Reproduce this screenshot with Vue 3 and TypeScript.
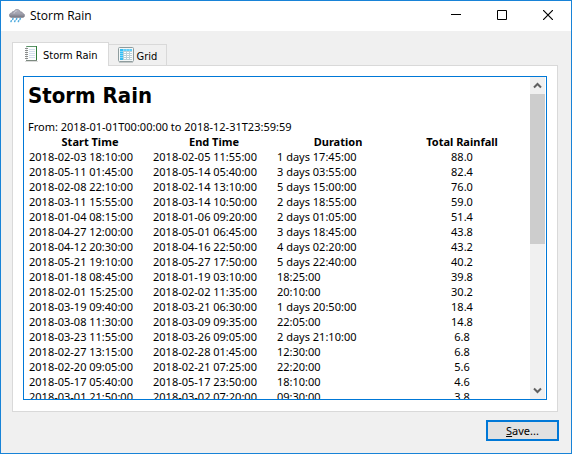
<script setup lang="ts">
import { ref } from 'vue'

interface Storm {
  start: string
  end: string
  duration: string
  total: string
}

const tab = ref<'report' | 'grid'>('report')
const viewport = ref<HTMLElement | null>(null)

const rows: [string, string, string, string][] = [
  ['2018-02-03 18:10:00', '2018-02-05 11:55:00', '1 days 17:45:00', '88.0'],
  ['2018-05-11 01:45:00', '2018-05-14 05:40:00', '3 days 03:55:00', '82.4'],
  ['2018-02-08 22:10:00', '2018-02-14 13:10:00', '5 days 15:00:00', '76.0'],
  ['2018-03-11 15:55:00', '2018-03-14 10:50:00', '2 days 18:55:00', '59.0'],
  ['2018-01-04 08:15:00', '2018-01-06 09:20:00', '2 days 01:05:00', '51.4'],
  ['2018-04-27 12:00:00', '2018-05-01 06:45:00', '3 days 18:45:00', '43.8'],
  ['2018-04-12 20:30:00', '2018-04-16 22:50:00', '4 days 02:20:00', '43.2'],
  ['2018-05-21 19:10:00', '2018-05-27 17:50:00', '5 days 22:40:00', '40.2'],
  ['2018-01-18 08:45:00', '2018-01-19 03:10:00', '18:25:00', '39.8'],
  ['2018-02-01 15:25:00', '2018-02-02 11:35:00', '20:10:00', '30.2'],
  ['2018-03-19 09:40:00', '2018-03-21 06:30:00', '1 days 20:50:00', '18.4'],
  ['2018-03-08 11:30:00', '2018-03-09 09:35:00', '22:05:00', '14.8'],
  ['2018-03-23 11:55:00', '2018-03-26 09:05:00', '2 days 21:10:00', '6.8'],
  ['2018-02-27 13:15:00', '2018-02-28 01:45:00', '12:30:00', '6.8'],
  ['2018-02-20 09:05:00', '2018-02-21 07:25:00', '22:20:00', '5.6'],
  ['2018-05-17 05:40:00', '2018-05-17 23:50:00', '18:10:00', '4.6'],
  ['2018-03-01 21:50:00', '2018-03-02 07:20:00', '09:30:00', '3.8'],
]
const storms: Storm[] = rows.map(([start, end, duration, total]) => ({ start, end, duration, total }))

function scroll(step: number) {
  viewport.value?.scrollBy({ top: step })
}
</script>

<template>
  <div class="window">
    <header class="titlebar">
      <svg class="app-icon" width="16" height="14" viewBox="0 0 16 14" aria-hidden="true">
        <defs>
          <linearGradient id="cloud" x1="0" y1="0" x2="0" y2="1">
            <stop offset="0" stop-color="#b4b4bf" />
            <stop offset="0.55" stop-color="#a0a0ad" />
            <stop offset="1" stop-color="#74747f" />
          </linearGradient>
        </defs>
        <path d="M3 8.5C1.2 8.5.4 7.5.4 6.2c0-1.300 1-2.200 2.300-2.200C3 2.700 4 2.300 5 2.500 5.600 1 6.700.4 8 .4c1.800 0 3 1 3.300 2.500C12.800 2.700 13.700 3.500 13.700 4.500c1.200.1 1.900.9 1.900 1.900 0 1.300-1 2.100-2.400 2.100z" fill="url(#cloud)" stroke="#7c7c89" stroke-width=".6" />
        <path d="M5 4.500c.4-1.600 1.300-2.500 2.700-2.500" fill="none" stroke="#d2d2da" />
        <path d="M4 9.600 3.700 10.300M7.700 9.600 7.400 10.300M11.300 9.600 11 10.300M2.300 11.800 2 12.500M6 11.800 5.700 12.500M9.700 11.800 9.400 12.500" stroke="#54aee0" stroke-width="1.600" stroke-linecap="round" />
      </svg>
      <h1 class="title">Storm Rain</h1>
      <div class="controls">
        <button type="button" aria-label="Minimize">
          <svg width="10" height="10" viewBox="0 0 10 10"><path d="M0 4.500h10" stroke="#000" /></svg>
        </button>
        <button type="button" aria-label="Maximize">
          <svg width="10" height="10" viewBox="0 0 10 10"><path d="M.5.5h9v9h-9z" fill="none" stroke="#000" /></svg>
        </button>
        <button type="button" aria-label="Close">
          <svg width="10" height="10" viewBox="0 0 10 10"><path d="M0 0l10 10M10 0L0 10" stroke="#000" stroke-width="1.200" /></svg>
        </button>
      </div>
    </header>

    <main class="content">
      <div class="tabs" role="tablist">
        <button type="button" role="tab" class="tab" :class="{ active: tab === 'report' }" :aria-selected="tab === 'report'" @click="tab = 'report'">
          <svg width="16" height="16" viewBox="0 0 16 16" aria-hidden="true">
            <path d="M1 15.500h13" stroke="#dcdcdc" />
            <path d="M2.500.5h10v14h-10z" fill="#fbfdfd" stroke="#5c9468" />
            <path d="M12.500 0v15" stroke="#2f7d3a" />
            <path d="M2 14.500h11" stroke="#7d8a80" />
            <path d="M5 3.500h6M5 5.500h6M5 7.500h6M5 9.500h6M5 11.500h6" stroke="#d3deec" />
            <path d="M2.500 1v13" stroke="#dfe6e4" />
            <path d="M1 2.500h3M1 4.500h3M1 6.500h3M1 8.500h3M1 10.500h3M1 12.500h3" stroke="#8c8c8c" />
          </svg>
          <span>Storm Rain</span>
        </button>
        <button type="button" role="tab" class="tab" :class="{ active: tab === 'grid' }" :aria-selected="tab === 'grid'" @click="tab = 'grid'">
          <svg width="16" height="16" viewBox="0 0 16 16" aria-hidden="true">
            <rect x=".5" y=".5" width="15" height="14" rx="1" fill="#f3f7f7" stroke="#8f9c9e" />
            <path d="M1 15.500h14" stroke="#c3c7c7" />
            <path d="M2 2h12v11H2z" fill="#b9d0d8" />
            <path d="M2 2h12v2H2z" fill="#62d0fb" />
            <path d="M2 2h3v11H2z" fill="#35bdf3" />
            <path d="M6 5h2v1H6zM9 5h2v1H9zM12 5h2v1h-2zM6 7h2v1H6zM9 7h2v1H9zM12 7h2v1h-2zM6 9h2v1H6zM9 9h2v1H9zM12 9h2v1h-2zM6 11h2v1H6zM9 11h2v1H9zM12 11h2v1h-2z" fill="#fff" />
            <path d="M2 4.500h3M2 6.500h3M2 8.500h3M2 10.500h3M5.500 2v2M8.500 2v2M11.500 2v2" stroke="#83d9fa" />
          </svg>
          <span>Grid</span>
        </button>
      </div>

      <section class="panel" role="tabpanel">
        <div class="browser">
          <div ref="viewport" class="viewport" tabindex="0">
            <h2>Storm Rain</h2>
            <p>From: 2018-01-01T00:00:00 to 2018-12-31T23:59:59</p>
            <table>
              <thead>
                <tr>
                  <th scope="col">Start Time</th>
                  <th scope="col">End Time</th>
                  <th scope="col">Duration</th>
                  <th scope="col" class="last">Total Rainfall</th>
                </tr>
              </thead>
              <tbody>
                <tr v-for="storm in storms" :key="storm.start">
                  <td>{{ storm.start }}</td>
                  <td>{{ storm.end }}</td>
                  <td>{{ storm.duration }}</td>
                  <td class="total">{{ storm.total }}</td>
                </tr>
              </tbody>
            </table>
          </div>
          <div class="scrollbar">
            <button type="button" aria-label="Scroll up" @click="scroll(-15)">
              <svg width="9" height="7" viewBox="0 0 9 7"><path d="M1 5.500 4.500 2 8 5.500" fill="none" stroke="#606060" stroke-width="2" /></svg>
            </button>
            <div class="track"><div class="thumb"></div></div>
            <button type="button" aria-label="Scroll down" @click="scroll(15)">
              <svg width="9" height="7" viewBox="0 0 9 7"><path d="M1 1.500 4.500 5 8 1.500" fill="none" stroke="#606060" stroke-width="2" /></svg>
            </button>
          </div>
        </div>
      </section>

      <footer class="actions">
        <button type="button" class="save" accesskey="s"><u>S</u>ave...</button>
      </footer>
    </main>
  </div>
</template>

<style>
body {
  margin: 0;
}
</style>

<style scoped>
.window {
  box-sizing: border-box;
  height: 100vh;
  display: flex;
  flex-direction: column;
  border: 1px solid #1883d7;
  background: #f0f0f0;
  color: #000;
  font-family: "Noto Sans", sans-serif;
  font-size: 11px;
  line-height: 15px;
}
button {
  margin: 0;
  padding: 0;
  border: 0;
  background: none;
  color: inherit;
  font: inherit;
}
svg {
  display: block;
  flex: none;
}
.titlebar {
  flex: none;
  display: flex;
  align-items: center;
  height: 30px;
  padding-left: 8px;
  background: #fff;
}
.title {
  margin: 0 0 0 5px;
  font: 12px/16px "Open Sans", "Noto Sans", sans-serif;
}
.controls {
  display: flex;
  align-self: stretch;
  margin-left: auto;
}
.controls button {
  display: flex;
  align-items: center;
  justify-content: center;
  width: 46px;
  padding-bottom: 2px;
}
.content {
  flex: 1;
  min-height: 0;
  display: flex;
  flex-direction: column;
  padding: 11px 12px 12px 11px;
}
.tabs {
  flex: none;
  display: flex;
  align-items: flex-end;
  height: 23px;
}
.tab {
  box-sizing: border-box;
  display: flex;
  align-items: center;
  gap: 3px;
  height: 21px;
  padding: 0 9px;
  border: 1px solid #d9d9d9;
  border-width: 1px 1px 0 0;
  font-family: "DejaVu Sans Condensed", "Noto Sans", sans-serif;
}
.tab.active {
  position: relative;
  height: 24px;
  margin-bottom: -1px;
  padding: 0 10px 2px 11px;
  border-left-width: 1px;
  background: #fff;
}
.tab span {
  padding-top: 3px;
}
.panel {
  flex: 1;
  min-height: 0;
  display: flex;
  margin-right: 1px;
  padding: 10px 10px 11px;
  border: 1px solid #d9d9d9;
  background: #fff;
}
.browser {
  flex: 1;
  min-width: 0;
  display: flex;
  border: 1px solid #0078d7;
}
.viewport {
  flex: 1;
  min-width: 0;
  overflow-y: auto;
  scrollbar-width: none;
  padding: 4px 6px 4px 4px;
  outline: none;
}
h2 {
  margin: 0 0 8px;
  font-family: "DejaVu Sans Condensed", "Noto Sans", sans-serif;
  font-size: 22px;
  line-height: 30px;
}
p {
  margin: 0;
}
table {
  width: 100%;
  table-layout: fixed;
  border-collapse: collapse;
}
th,
td {
  padding: 0 1px;
  text-align: left;
  white-space: nowrap;
}
th {
  width: 122px;
}
th.last {
  width: auto;
}
th,
.total {
  text-align: center;
}
.scrollbar {
  flex: none;
  display: flex;
  flex-direction: column;
  width: 15px;
  margin-right: 1px;
  background: #f0f0f0;
}
.scrollbar button {
  display: flex;
  align-items: center;
  justify-content: center;
  height: 17px;
}
.track {
  flex: 1;
}
.thumb {
  height: 52%;
  background: #cdcdcd;
}
.actions {
  flex: none;
  display: flex;
  justify-content: flex-end;
  padding-top: 8px;
}
.save {
  box-sizing: border-box;
  width: 73px;
  height: 21px;
  border: 2px solid #0078d7;
  background: #e1e1e1;
}
</style>
